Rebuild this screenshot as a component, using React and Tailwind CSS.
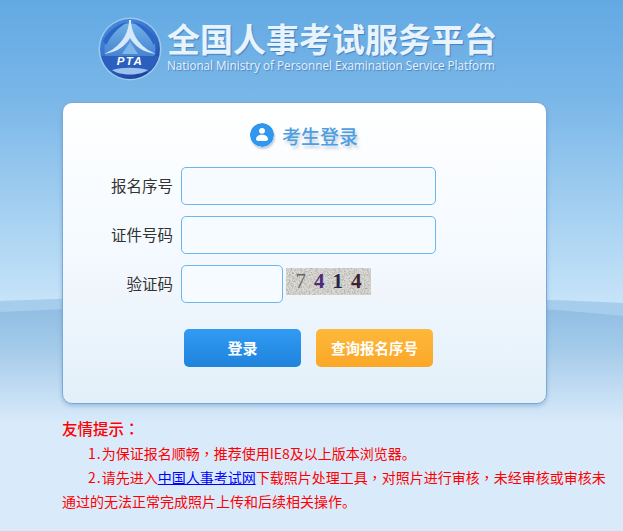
import React from "react";

const cjk = { fontFamily: '"Noto Sans CJK SC", "Liberation Sans", sans-serif' };
const tc = { fontFamily: '"Noto Sans CJK TC", sans-serif' };

function Logo() {
  return (
    <svg width="64" height="64" viewBox="0 0 64 64" className="shrink-0">
      <defs>
        <linearGradient id="lg" x1="0.2" y1="0" x2="0.7" y2="1">
          <stop offset="0" stopColor="#4a8bdc" />
          <stop offset="0.55" stopColor="#2f6cc8" />
          <stop offset="1" stopColor="#1c3f9c" />
        </linearGradient>
        <linearGradient id="inner" x1="0" y1="0" x2="0" y2="1">
          <stop offset="0" stopColor="#6fb0e6" />
          <stop offset="1" stopColor="#2f6cc8" />
        </linearGradient>
      </defs>
      <circle cx="32" cy="32" r="31.5" fill="#b7d8f3" opacity="0.6" />
      <circle cx="32" cy="32" r="30" fill="url(#lg)" />
      <circle cx="32" cy="32" r="25.5" fill="url(#inner)" />
      <path d="M5 24 C11 13 20 7 29 5 C22 10 13 17 8.5 28 Z" fill="#2d66c4" />
      <path d="M59 24 C53 13 44 7 35 5 C42 10 51 17 55.5 28 Z" fill="#2d66c4" />
      <path d="M31 3 C31 16 23 30 6 37 C20 35 27 29 32 21 C37 29 44 35 58 37 C41 30 33 16 33 3 Z" fill="#d5e9fb" />
      <path d="M32 25 L40 37 L24 37 Z" fill="#7fb6ea" />
      <path d="M3.5 39 H60.5 C58 48 54 52 50 55 C40 51 24 51 14 55 C10 52 6 48 3.5 39 Z" fill="#2a5fbd" />
      <text x="32" y="47.5" textAnchor="middle" fontFamily="Liberation Sans" fontStyle="italic" fontWeight="700" fontSize="11.5" letterSpacing="1.5" fill="#ffffff">PTA</text>
      <path d="M14 53 C24 50 40 50 50 53 C42 59 22 59 14 53 Z" fill="#9cc2ee" />
    </svg>
  );
}

function UserIcon() {
  return (
    <svg width="24" height="24" viewBox="0 0 26 26" className="shrink-0 rounded-full shadow-[1px_2px_2px_rgba(120,140,170,0.45)]">
      <circle cx="13" cy="13" r="13" fill="#2f97ee" />
      <circle cx="13" cy="8.5" r="3.2" fill="#fff" />
      <path d="M6.5 18.5 C6.5 14 9 12.6 13 12.6 C17 12.6 19.5 14 19.5 18.5 L17.2 19.6 L8.8 19.6 Z" fill="#fff" />
    </svg>
  );
}

function Field({ label, narrow }) {
  return (
    <div className="flex items-center h-[38px]">
      <div className="w-[110px] text-right text-[15.5px] leading-none text-[#333]">{label}</div>
      <input
        className={`ml-[8px] h-[38px] rounded-[5px] border border-[#6cb6f0] bg-[#f5fbff] outline-none ${narrow ? "w-[102px]" : "w-[255px]"}`}
      />
      {narrow && (
        <div className="relative ml-[3px] mb-[6px] flex h-[27px] w-[85px] items-center justify-center gap-[8px] overflow-hidden bg-[#c4c4bc] text-[21px] font-bold leading-none"
          style={{ fontFamily: '"Liberation Serif", serif' }}>
          <svg className="absolute inset-0" width="85" height="27">
            <filter id="nz">
              <feTurbulence type="fractalNoise" baseFrequency="0.6" numOctaves="2" seed="4" />
              <feColorMatrix values="0 0 0 0 0.42  0 0 0 0 0.42  0 0 0 0 0.38  2.6 0 0 0 -1.05" />
            </filter>
            <rect width="85" height="27" fill="#dcdad6" />
            <rect width="85" height="27" filter="url(#nz)" />
          </svg>
          <span className="relative font-normal text-[#666666]">7</span>
          <span className="relative text-[#4b2a78]">4</span>
          <span className="relative text-[#25284a]">1</span>
          <span className="relative text-[#3b2233]">4</span>
        </div>
      )}
    </div>
  );
}

function Comma() {
  return <span style={tc}>，</span>;
}

export default function App() {
  return (
    <div
      className="relative h-[531px] w-[623px] overflow-hidden bg-[linear-gradient(180deg,#62a9e3_0px,#7ab7e8_100px,#a8d2f2_220px,#c4e2f8_296px)]"
      style={cjk}
    >
      {/* background swoosh */}
      <svg className="absolute left-0 top-0" width="623" height="531" viewBox="0 0 623 531">
        <defs>
          <linearGradient id="wave" x1="0" y1="0" x2="0" y2="1">
            <stop offset="0" stopColor="#8ebce2" />
            <stop offset="0.35" stopColor="#a2c9e9" />
            <stop offset="0.75" stopColor="#c5def4" />
            <stop offset="1" stopColor="#d9ebfb" />
          </linearGradient>
        </defs>
        <path d="M0 301 C140 296 230 294 330 296 C430 297 530 298 623 303 L623 531 L0 531 Z" fill="#a6cdec" />
        <path d="M0 312 C120 306 230 304 330 302 C430 304 530 306 623 316 L623 425 L0 425 Z" fill="url(#wave)" />
        <rect x="0" y="424" width="623" height="107" fill="#d9ebfb" />
      </svg>

      <div className="relative">
        {/* header */}
        <div className="flex h-[102px] items-start pl-[98px] pt-[17px]">
          <Logo />
          <div className="ml-[5px] pt-[1px]">
            <div className="whitespace-nowrap text-[33px] font-bold leading-[40px] text-[#e8f4fd] [text-shadow:1px_1px_1px_rgba(40,90,160,0.55)]">
              全国人事考试服务平台
            </div>
            <div
              className="mt-[-1px] whitespace-nowrap text-[11.7px] leading-[16px] text-[#e6f2fb] [text-shadow:1px_1px_1px_rgba(40,90,160,0.55)]"
              style={{ fontFamily: '"Open Sans", sans-serif' }}
            >
              National Ministry of Personnel Examination Service Platform
            </div>
          </div>
        </div>

        {/* card */}
        <div className="ml-[62px] h-[302px] w-[485px] rounded-[10px] border border-[#7aa9d8] bg-[linear-gradient(180deg,#ffffff_0px,#f3f9ff_160px,#f0f5fb_195px,#eef6fd_200px,#e3f0f9_300px)] shadow-[0_2px_4px_rgba(90,140,190,0.45)]">
          <div className="flex h-[64px] items-start justify-center pr-[1px] pt-[20px]">
            <UserIcon />
            <span className="ml-[8px] text-[19px] font-medium leading-[26px] text-[#4d9fe2] [text-shadow:2px_3px_3px_rgba(120,140,170,0.4)]">考生登录</span>
          </div>
          <div className="flex flex-col gap-[11px]">
            <Field label="报名序号" />
            <Field label="证件号码" />
            <Field label="验证码" narrow />
          </div>
          <div className="ml-[121px] mt-[26px] flex gap-[15px]">
            <button className="h-[38px] w-[117px] rounded-[5px] bg-[linear-gradient(180deg,#319bf3,#1f83dc)] text-[15px] font-bold text-white">
              登录
            </button>
            <button className="h-[38px] w-[117px] rounded-[5px] bg-[linear-gradient(180deg,#ffb83a,#faa727)] text-[14.5px] font-bold text-white">
              查询报名序号
            </button>
          </div>
        </div>

        {/* notes */}
        <div className="ml-[62px] mt-[12px] w-[548px] text-[#ff0000]">
          <div className="text-[15.5px] font-medium leading-[24px]">友情提示<span style={tc}>：</span></div>
          <div className="mt-[1px] text-[14px] leading-[24px]">
            <p className="indent-[26px]"><span className="tracking-[1px]">1.</span>为保证报名顺畅<Comma />推荐使用IE8及以上版本浏览器。</p>
            <p className="indent-[26px]">
              <span className="tracking-[1px]">2.</span>请先进入<a className="text-[#0000ff] underline">中国人事考试网</a>下载照片处理工具<Comma />对照片进行审核<Comma />未经审核或审核未通过的无法正常完成照片上传和后续相关操作。
            </p>
          </div>
        </div>
      </div>
    </div>
  );
}
